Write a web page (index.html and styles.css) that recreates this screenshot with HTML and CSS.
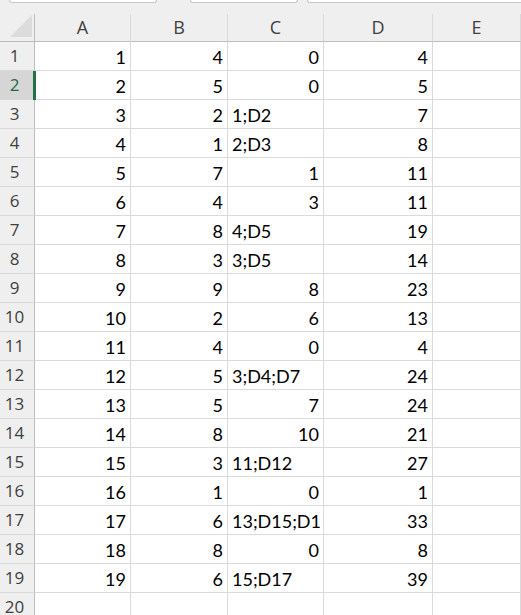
FILE: index.html
```html
<!DOCTYPE html>
<html>
<head>
<meta charset="utf-8">
<link rel="stylesheet" href="styles.css">
</head>
<body>
<div class="topbar">
  <div class="tab tab1"></div>
  <div class="tab tab2"></div>
  <div class="tab tab3"></div>
</div>
<div class="sheet">
  <div class="corner"><div class="tri"></div></div>
  <div class="colh">A</div><div class="colh">B</div><div class="colh">C</div><div class="colh">D</div><div class="colh">E</div>

  <div class="rowh">1</div><div class="c n">1</div><div class="c n">4</div><div class="c n">0</div><div class="c n">4</div><div class="c"></div>
  <div class="rowh sel">2</div><div class="c n">2</div><div class="c n">5</div><div class="c n">0</div><div class="c n">5</div><div class="c"></div>
  <div class="rowh">3</div><div class="c n">3</div><div class="c n">2</div><div class="c t">1;D2</div><div class="c n">7</div><div class="c"></div>
  <div class="rowh">4</div><div class="c n">4</div><div class="c n">1</div><div class="c t">2;D3</div><div class="c n">8</div><div class="c"></div>
  <div class="rowh">5</div><div class="c n">5</div><div class="c n">7</div><div class="c n">1</div><div class="c n">11</div><div class="c"></div>
  <div class="rowh">6</div><div class="c n">6</div><div class="c n">4</div><div class="c n">3</div><div class="c n">11</div><div class="c"></div>
  <div class="rowh">7</div><div class="c n">7</div><div class="c n">8</div><div class="c t">4;D5</div><div class="c n">19</div><div class="c"></div>
  <div class="rowh">8</div><div class="c n">8</div><div class="c n">3</div><div class="c t">3;D5</div><div class="c n">14</div><div class="c"></div>
  <div class="rowh">9</div><div class="c n">9</div><div class="c n">9</div><div class="c n">8</div><div class="c n">23</div><div class="c"></div>
  <div class="rowh">10</div><div class="c n">10</div><div class="c n">2</div><div class="c n">6</div><div class="c n">13</div><div class="c"></div>
  <div class="rowh">11</div><div class="c n">11</div><div class="c n">4</div><div class="c n">0</div><div class="c n">4</div><div class="c"></div>
  <div class="rowh">12</div><div class="c n">12</div><div class="c n">5</div><div class="c t">3;D4;D7</div><div class="c n">24</div><div class="c"></div>
  <div class="rowh">13</div><div class="c n">13</div><div class="c n">5</div><div class="c n">7</div><div class="c n">24</div><div class="c"></div>
  <div class="rowh">14</div><div class="c n">14</div><div class="c n">8</div><div class="c n">10</div><div class="c n">21</div><div class="c"></div>
  <div class="rowh">15</div><div class="c n">15</div><div class="c n">3</div><div class="c t">11;D12</div><div class="c n">27</div><div class="c"></div>
  <div class="rowh">16</div><div class="c n">16</div><div class="c n">1</div><div class="c n">0</div><div class="c n">1</div><div class="c"></div>
  <div class="rowh">17</div><div class="c n">17</div><div class="c n">6</div><div class="c t">13;D15;D1</div><div class="c n">33</div><div class="c"></div>
  <div class="rowh">18</div><div class="c n">18</div><div class="c n">8</div><div class="c n">0</div><div class="c n">8</div><div class="c"></div>
  <div class="rowh">19</div><div class="c n">19</div><div class="c n">6</div><div class="c t">15;D17</div><div class="c n">39</div><div class="c"></div>
  <div class="rowh">20</div><div class="c"></div><div class="c"></div><div class="c"></div><div class="c"></div><div class="c"></div>
</div>
</body>
</html>
```
FILE: styles.css
```css
html, body {
  margin: 0;
  padding: 0;
  background: #efefef;
  overflow: hidden;
  width: 521px;
  height: 615px;
}

.topbar {
  height: 14px;
  display: flex;
  align-items: flex-start;
  background: #efefef;
}

.tab {
  height: 2px;
  background: #ffffff;
  border: 1px solid #c6c6c6;
  border-top: none;
  border-radius: 0 0 5px 5px;
  box-sizing: content-box;
}

.tab1 { margin-left: 9px; width: 146px; }
.tab2 { margin-left: 33px; width: 106px; }
.tab3 { margin-left: 9px; flex: 1; border-right: none; border-radius: 0 0 0 5px; }

.sheet {
  display: grid;
  grid-template-columns: 35px 96px 97px 96px 109px 1fr;
  grid-template-rows: 28px;
  grid-auto-rows: 29px;
  background: #ffffff;
}

.corner {
  background: #efefef;
  border-right: 1px solid #bdbdbd;
  border-bottom: 1px solid #bdbdbd;
  box-sizing: border-box;
  position: relative;
}

.tri {
  position: absolute;
  left: 10px;
  top: 1px;
  width: 22px;
  height: 22px;
  background: #dcdcdc;
  clip-path: polygon(100% 0, 100% 100%, 0 100%);
}

.colh {
  background: #efefef;
  border-right: 1px solid #d9d9d9;
  border-bottom: 1px solid #bdbdbd;
  box-sizing: border-box;
  font-family: "Open Sans", "Noto Sans", sans-serif;
  font-size: 18px;
  line-height: 27px;
  color: #3f3f3f;
  text-align: center;
}

.rowh {
  background: #efefef;
  border-right: 1px solid #bdbdbd;
  border-bottom: 1px solid #d9d9d9;
  box-sizing: border-box;
  font-family: "Open Sans", "Noto Sans", sans-serif;
  font-size: 17px;
  line-height: 28px;
  color: #3f3f3f;
  text-align: center;
  padding-right: 5px;
  position: relative;
}

.rowh.sel {
  background: #d6d6d6;
  color: #1d6b40;
}

.rowh.sel::after {
  content: "";
  position: absolute;
  right: -2px;
  top: 0;
  bottom: -1px;
  width: 3px;
  background: #217346;
  z-index: 2;
}

.c {
  border-right: 1px solid #dadada;
  border-bottom: 1px solid #dadada;
  box-sizing: border-box;
  font-family: "Lato", "Liberation Sans", sans-serif;
  font-size: 18px;
  line-height: 26px;
  padding-top: 2px;
  color: #000000;
  white-space: nowrap;
  overflow: hidden;
}

.c.n {
  text-align: right;
  padding-right: 4px;
}

.c.t {
  text-align: left;
  padding-left: 4px;
}
```
